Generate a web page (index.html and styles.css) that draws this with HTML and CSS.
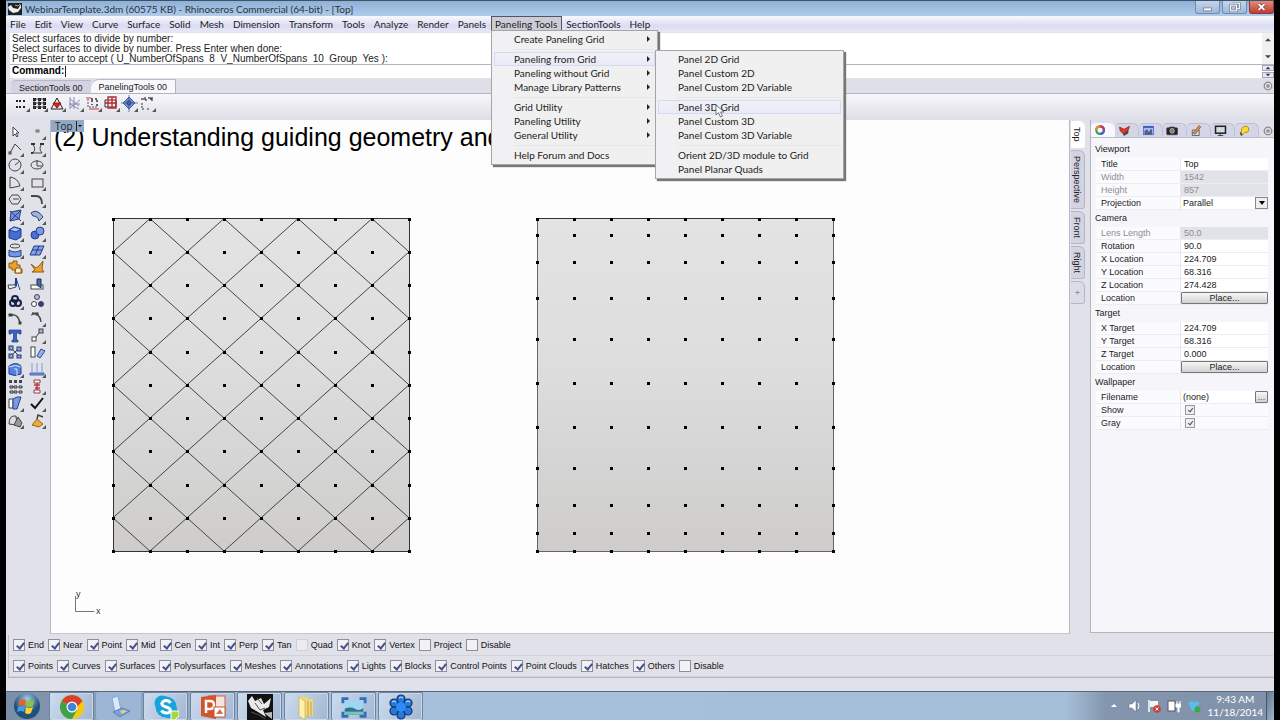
FILE: index.html
```html
<!DOCTYPE html>
<html lang="en">
<head>
<meta charset="utf-8">
<title>WebinarTemplate.3dm - Rhinoceros</title>
<link rel="stylesheet" href="styles.css">
</head>
<body>
<header class="titlebar">
  <svg class="app-icon" viewBox="0 0 14 12"><rect width="14" height="12" fill="#222"/><path d="M0 4l3-2 2 3 5 1 3-5v4l-3 4-5 1-4-3z" fill="#eee"/><path d="M7 2l3 1 2-2" stroke="#aaa" fill="none"/></svg>
  <h1 class="title">WebinarTemplate.3dm (60575 KB) - Rhinoceros Commercial (64-bit) - [Top]</h1>
  <div class="window-buttons">
    <button class="wbtn" aria-label="Minimize"><svg viewBox="0 0 24 12"><rect x="8" y="7" width="8" height="3" fill="#fff" stroke="#667" stroke-width=".7"/></svg></button>
    <button class="wbtn" aria-label="Restore"><svg viewBox="0 0 24 12"><path d="M11 2h6v6h-3M8 4h6v6H8z" fill="none" stroke="#56657d" stroke-width="2.4"/><path d="M11 2h6v6h-3M8 4h6v6H8z" fill="none" stroke="#fff" stroke-width="1.3"/></svg></button>
    <button class="wbtn close" aria-label="Close"><svg viewBox="0 0 24 12"><path d="M9 3l6 6M15 3l-6 6" stroke="#733" stroke-width="3.4"/><path d="M9 3l6 6M15 3l-6 6" stroke="#fff" stroke-width="2.2"/></svg></button>
  </div>
</header>

<nav class="menubar">
  <button>File</button><button>Edit</button><button>View</button><button>Curve</button><button>Surface</button><button>Solid</button><button>Mesh</button><button>Dimension</button><button>Transform</button><button>Tools</button><button>Analyze</button><button>Render</button><button>Panels</button>
  <div class="menu-anchor">
    <button class="open">Paneling Tools</button>
    <div class="menu main-menu">
      <button class="parent">Create Paneling Grid</button>
      <hr>
      <div class="menu-anchor">
        <button class="parent hot">Paneling from Grid</button>
        <div class="menu sub-menu">
          <button>Panel 2D Grid</button>
          <button>Panel Custom 2D</button>
          <button>Panel Custom 2D Variable</button>
          <hr>
          <button class="hot">Panel 3D Grid<svg class="cursor" viewBox="0 0 10 14"><path d="M1 1v10l2.500-2.500L5.500 13l2-1-2-4H9z" fill="#fff" stroke="#555" stroke-width=".8"/></svg></button>
          <button>Panel Custom 3D</button>
          <button>Panel Custom 3D Variable</button>
          <hr>
          <button>Orient 2D/3D module to Grid</button>
          <button>Panel Planar Quads</button>
        </div>
      </div>
      <button class="parent">Paneling without Grid</button>
      <button class="parent">Manage Library Patterns</button>
      <hr>
      <button class="parent">Grid Utility</button>
      <button class="parent">Paneling Utility</button>
      <button class="parent">General Utility</button>
      <hr>
      <button>Help Forum and Docs</button>
    </div>
  </div>
  <button>SectionTools</button><button>Help</button>
</nav>

<section class="command">
  <div class="history">
    <div class="lines">
      <p>Select surfaces to divide by number:</p>
      <p>Select surfaces to divide by number. Press Enter when done:</p>
      <p>Press Enter to accept ( U_NumberOfSpans&nbsp; 8&nbsp; V_NumberOfSpans&nbsp; 10&nbsp; Group&nbsp; Yes ):</p>
    </div>
    <div class="scroll"><svg viewBox="0 0 8 5"><path d="M4 0l4 4H0z"/></svg><svg viewBox="0 0 8 5"><path d="M0 0h8L4 4z"/></svg></div>
  </div>
  <div class="prompt">
    <label for="cmd">Command:</label><input id="cmd" type="text">
    <div class="spin"><button aria-label="Previous"><svg viewBox="0 0 8 5"><path d="M4 1l3 3H1z"/></svg></button><button aria-label="Next"><svg viewBox="0 0 8 5"><path d="M1 1h6L4 4z"/></svg></button></div>
  </div>
</section>

<div class="tabstrip">
  <button class="tab">SectionTools 00</button><button class="tab active">PanelingTools 00</button>
  <svg class="gear" viewBox="0 0 10 10"><circle cx="5" cy="5" r="3.800"/><circle cx="5" cy="5" r="1.200"/></svg>
</div>
<div class="toolbar" id="toolbar"></div>

<main class="workspace">
  <aside class="tools" id="tools"></aside>
  <section class="viewport">
    <svg class="scene" id="scene" aria-label="Paneling grids"></svg>
    <button class="view-label">Top<span class="caret"></span></button>
    <h2 class="scene-title">(2) Understanding guiding geometry and</h2>
  </section>
  <nav class="viewtabs">
    <button class="active">Top</button><button>Perspective</button><button>Front</button><button>Right</button><button class="plus">+</button>
  </nav>
  <aside class="panel">
    <div class="panel-tabs" id="panelTabs"></div>
    <form class="props">
      <h3>Viewport</h3>
      <div class="row"><label for="p1">Title</label><input id="p1" value="Top"></div>
      <div class="row off"><label for="p2">Width</label><input id="p2" value="1542" disabled></div>
      <div class="row off"><label for="p3">Height</label><input id="p3" value="857" disabled></div>
      <div class="row"><label for="p4">Projection</label><div class="pick"><select id="p4"><option>Parallel</option></select><span class="drop"></span></div></div>
      <h3>Camera</h3>
      <div class="row off"><label for="c1">Lens Length</label><input id="c1" value="50.0" disabled></div>
      <div class="row"><label for="c2">Rotation</label><input id="c2" value="90.0"></div>
      <div class="row"><label for="c3">X Location</label><input id="c3" value="224.709"></div>
      <div class="row"><label for="c4">Y Location</label><input id="c4" value="68.316"></div>
      <div class="row"><label for="c5">Z Location</label><input id="c5" value="274.428"></div>
      <div class="row"><label for="c6">Location</label><button type="button" id="c6" class="place">Place...</button></div>
      <h3>Target</h3>
      <div class="row"><label for="t1">X Target</label><input id="t1" value="224.709"></div>
      <div class="row"><label for="t2">Y Target</label><input id="t2" value="68.316"></div>
      <div class="row"><label for="t3">Z Target</label><input id="t3" value="0.000"></div>
      <div class="row"><label for="t4">Location</label><button type="button" id="t4" class="place">Place...</button></div>
      <h3>Wallpaper</h3>
      <div class="row"><label for="w1">Filename</label><div class="pick"><input id="w1" value="(none)"><button type="button" class="more">...</button></div></div>
      <div class="row"><label for="w2">Show</label><input id="w2" type="checkbox" class="mini" checked></div>
      <div class="row"><label for="w3">Gray</label><input id="w3" type="checkbox" class="mini" checked></div>
    </form>
  </aside>
</main>

<footer class="snaps">
  <div class="snap-row">
    <label><input type="checkbox" checked>End</label><label><input type="checkbox" checked>Near</label><label><input type="checkbox" checked>Point</label><label><input type="checkbox" checked>Mid</label><label><input type="checkbox" checked>Cen</label><label><input type="checkbox" checked>Int</label><label><input type="checkbox" checked>Perp</label><label><input type="checkbox" checked>Tan</label><label><input type="checkbox" class="faint">Quad</label><label><input type="checkbox" checked>Knot</label><label><input type="checkbox" checked>Vertex</label><label><input type="checkbox">Project</label><label><input type="checkbox">Disable</label>
  </div>
  <div class="snap-row">
    <label><input type="checkbox" checked>Points</label><label><input type="checkbox" checked>Curves</label><label><input type="checkbox" checked>Surfaces</label><label><input type="checkbox" checked>Polysurfaces</label><label><input type="checkbox" checked>Meshes</label><label><input type="checkbox" checked>Annotations</label><label><input type="checkbox" checked>Lights</label><label><input type="checkbox" checked>Blocks</label><label><input type="checkbox" checked>Control Points</label><label><input type="checkbox" checked>Point Clouds</label><label><input type="checkbox" checked>Hatches</label><label><input type="checkbox" checked>Others</label><label><input type="checkbox">Disable</label>
  </div>
  <div class="status"></div>
</footer>

<div class="taskbar">
  <button class="start" aria-label="Start"><svg viewBox="0 0 28 28"><defs><radialGradient id="orb" cy=".25"><stop offset="0" stop-color="#a8cfe6"/><stop offset="1" stop-color="#22507c"/></radialGradient></defs><circle cx="14" cy="14" r="13" fill="url(#orb)"/><path d="M6 9q4-3 7-1l-1 6q-3-2-7 0z" fill="#e8632b"/><path d="M14 8q3 2 7 0l-1 6q-4 2-7 0z" fill="#8cc63f"/><path d="M5 15q4-2 7 0l-1 5q-3-2-7 0z" fill="#3f9fe0"/><path d="M13 15q3 2 7 0l-2 6q-3 2-6 0z" fill="#fcd02f"/></svg></button>
  <button class="task" aria-label="Chrome"><svg viewBox="0 0 26 26"><circle cx="13" cy="13" r="12" fill="#f6c90e"/><path d="M13 13L2.600 7A12 12 0 0 1 23.400 7z" fill="#d8402f"/><path d="M13 13L2.600 7A12 12 0 0 0 13 25l5-9z" fill="#3da04a"/><path d="M13 7h10.400L18 13z" fill="#d8402f"/><circle cx="13" cy="13" r="5.500" fill="#fff"/><circle cx="13" cy="13" r="4.300" fill="#3f86d8"/></svg></button>
  <button class="task flat" aria-label="Scanner"><svg viewBox="0 0 26 26"><path d="M6 4l6-2 3 14-6 2z" fill="#dbe9fa" stroke="#8aa6d6"/><path d="M7 18l9-4 8 3-10 6z" fill="#7f9fd8" stroke="#5c7fc0"/><path d="M14 17l4-1 3 1-5 3z" fill="#d8dd6c"/></svg></button>
  <button class="task" aria-label="Skype"><svg viewBox="0 0 26 26"><circle cx="9" cy="9" r="7.500" fill="#17a4dc"/><circle cx="17" cy="17" r="7.500" fill="#17a4dc"/><circle cx="13" cy="13" r="10.500" fill="#17a4dc"/><path d="M17.500 9Q16 6.500 13 6.500T8.800 9.500Q9 12 13 13t4.500 3.500Q17 19 13.500 19T8.500 16.500" fill="none" stroke="#fff" stroke-width="3"/><path d="M18 17h8v5l-4 4h-4z" fill="#a6d83f" stroke="#fff"/></svg></button>
  <button class="task" aria-label="PowerPoint"><svg viewBox="0 0 26 26"><rect x="8" y="2" width="17" height="20" fill="#f7e4dc" stroke="#d0603a"/><path d="M1 3l15-2v24L1 22z" fill="#d3532a"/><path d="M6 19V7h4q4 0 4 4t-4 4H6" fill="none" stroke="#fff" stroke-width="2.500"/><rect x="14" y="13" width="11" height="10" fill="#fff" stroke="#c9572e"/><path d="M16 20l4-5 3 5z" fill="#d66d48"/></svg></button>
  <button class="task" aria-label="Rhinoceros"><svg viewBox="0 0 26 26"><rect width="26" height="26" fill="#111"/><path d="M1 7l4-5 3 5 6-3 3 6 7-6-2 9-6 3 3 7-8-5-7-4z" fill="#e8e8e8"/><path d="M8 9l5 7 5-2M4 18l8 3 6 4M10 4l5 6" stroke="#555" fill="none"/><path d="M17 19l8-1v7z" fill="#bbb"/></svg></button>
  <button class="task" aria-label="Explorer"><svg viewBox="0 0 26 26"><path d="M5 3h8l2 2h4v17H8l-3-2z" fill="#f0d779"/><path d="M5 3l6 4v19l-6-4z" fill="#fff0ae" stroke="#cfae4a" stroke-width=".7"/><path d="M14 7v16M17 8v14" stroke="#c5a548"/></svg></button>
  <button class="task" aria-label="Capture"><svg viewBox="0 0 28 26"><rect x="4" y="6" width="20" height="15" fill="#9fd7f3"/><path d="M4 15q6-3 11 0t9-1v7H4z" fill="#31748d"/><path d="M4 18h20v3H4z" fill="#7ac2ba"/><path d="M2 9V4h6M20 4h6v5M26 18v5h-6M8 23H2v-5" stroke="#2f70b8" stroke-width="3" fill="none"/></svg></button>
  <button class="task" aria-label="GoToWebinar"><svg viewBox="0 0 26 26"><g fill="#2779df" stroke="#103269" stroke-width="1.200"><circle cx="13" cy="5" r="4"/><circle cx="20" cy="9" r="4"/><circle cx="20" cy="17" r="4"/><circle cx="13" cy="21" r="4"/><circle cx="6" cy="17" r="4"/><circle cx="6" cy="9" r="4"/></g><circle cx="13" cy="13" r="5" fill="#2e8cf5"/><path d="M11 4q2-2 4 0M4 8q2-2 4 0M18 8q2-2 4 0" stroke="#c8e8ff" fill="none"/></svg></button>
  <div class="tray">
    <svg viewBox="0 0 14 14"><path d="M4 8l3-3 3 3z" fill="#fff"/></svg>
    <svg viewBox="0 0 14 14"><path d="M2 5h3l4-4v12L5 9H2z" fill="#fff" stroke="#567" stroke-width=".5"/><path d="M11 4q2 3 0 6" stroke="#fff" fill="none"/></svg>
    <svg viewBox="0 0 14 14"><path d="M2 1v12" stroke="#fff" stroke-width="1.500"/><path d="M3 2h8v6H3z" fill="#f3f3f3"/><circle cx="10" cy="10" r="3.800" fill="#d43b35"/><path d="M8.500 8.500l3 3M11.500 8.500l-3 3" stroke="#fff"/></svg>
    <svg viewBox="0 0 14 14"><rect x="1" y="2" width="7" height="10" fill="#fff" stroke="#556"/><path d="M10 2v3M13 2v3M9 5h5v3h-2v5h-1V8H9z" stroke="#fff" fill="#fff"/></svg>
    <svg viewBox="0 0 14 14"><path d="M1 4l4-2 2 2 3-2 3 3-4 2 1 4-5 1-2-5z" fill="#55c0ee"/><circle cx="10.500" cy="10.500" r="3" fill="#3aaa46"/></svg>
    <div class="clock"><span>9:43 AM</span><span>11/18/2014</span></div>
    <button class="show-desktop" aria-label="Show desktop"></button>
  </div>
</div>
<script src="script.js"></script>
</body>
</html>
```
FILE: styles.css
```css
* { box-sizing: border-box; }
body {
  margin: 0; padding: 0 6px; height: 100vh; min-height: 600px;
  display: flex; flex-direction: column; overflow: hidden;
  background: #000; color: #222;
  font: 9px/12px "Liberation Sans", Arial, sans-serif;
}
button, input, select { font: inherit; color: inherit; border: 0; margin: 0; padding: 0; background: none; }
h1, h2, h3, p { margin: 0; font-weight: normal; }
svg { display: block; }

.titlebar {
  display: flex; align-items: center; gap: 3px; height: 16px; flex: none; padding-left: 2px;
  background: linear-gradient(#8fb0d6, #b0cbe8); border-top: 1px solid #3d5361;
}
.app-icon { width: 14px; height: 12px; }
.title { font: 10px/14px Lato, "Open Sans", sans-serif; color: #28323f; flex: 1; }
.window-buttons { display: flex; gap: 2px; align-self: stretch; }
.wbtn { width: 25px; height: 13px; border: 1px solid #6f8cb0; border-top: 0; border-radius: 0 0 3px 3px; background: linear-gradient(#c3d5ea, #9db9da); }
.wbtn svg { width: 100%; height: 12px; }
.wbtn.close { background: linear-gradient(#e08c80, #c33c2b); border-color: #8c3a38; }

.menubar {
  position: relative; z-index: 5; display: flex; height: 16px; flex: none;
  font: 10px/14px Lato, "Open Sans", sans-serif; color: #222;
  background: linear-gradient(#f8f9fe, #dadcf4 60%, #e6e7f4);
}
.menubar > button, .menu-anchor > .open { padding: 0 5px 0 4px; height: 15px; white-space: nowrap; }
.menu-anchor { position: relative; }
.menu-anchor > .open { background: #ccccd8; border: 1px solid #55555f; padding: 0 4px 0 3px; }
.menu {
  position: absolute; display: flex; flex-direction: column; padding: 1px 2px 2px;
  background: linear-gradient(90deg, #f1f1f3 20px, #f0f0f0 22px);
  border: 1px solid #a5a5a8; box-shadow: 2px 2px 1px #777;
}
.main-menu { left: 0; top: 14px; width: 167px; }
.sub-menu { left: 161px; top: -2px; width: 189px; z-index: 2; }
.menu button { display: block; width: 100%; height: 14px; padding-left: 20px; text-align: left; white-space: nowrap; position: relative; }
.menu button.hot { background: linear-gradient(#f0f0f8, #e8eaf6); box-shadow: inset 0 0 0 1px #d3dcef; }
.menu hr { width: auto; height: 1px; margin: 3px 0 2px 20px; border: 0; background: #e6e6e8; }
.parent::after { content: ""; position: absolute; right: 5px; top: 4px; border: 3px solid transparent; border-left-color: #222; border-right: 0; }
.menu .cursor { position: absolute; left: 57px; top: 4px; width: 10px; height: 14px; z-index: 3; }

.command { flex: none; background: #e3e3ec; padding: 1px 0 1px 4px; font-size: 10px; }
.history { display: flex; height: 32px; background: #fff; border-bottom: 1px solid #b5b5bb; }
.lines { flex: 1; line-height: 10px; padding: 1px 0 0 2px; }
.scroll { width: 12px; background: #f1f1f3; display: flex; flex-direction: column; justify-content: space-between; align-items: center; padding: 5px 0; }
.scroll svg { width: 6px; height: 4px; fill: #444; }
.prompt { display: flex; height: 13px; background: #fff; padding-left: 2px; }
.prompt label { font-weight: bold; color: #000; }
.prompt input { flex: 1; margin: 1px 0 1px 1px; border-left: 1px solid #222; outline: 0; }
.spin { display: flex; flex-direction: column; width: 12px; gap: 1px; }
.spin button { height: 6px; background: #e8e8f2; border: 1px solid #a8a8bb; }
.spin svg { width: 8px; height: 4px; margin: auto; fill: #336; }

.tabstrip { display: flex; flex: none; align-items: flex-end; height: 15px; padding-left: 5px; background: #dfdfe8; border-bottom: 1px solid #b3b3c0; }
.tab { height: 13px; padding: 1px 8px 0; background: #d3d3e2; border-top: 1px solid #b8b8c6; border-radius: 5px 0 0 0; }
.tab.active { height: 14px; background: #f8f8fc; border-right: 1px solid #b3b3c0; border-radius: 8px 0 0 0; }
.gear { width: 10px; height: 10px; margin: 0 1px 2px auto; fill: none; stroke: #888; stroke-width: 1.200; }
.toolbar { display: flex; flex: none; gap: 1px; height: 26px; padding: 1px 7px; background: linear-gradient(#f7f7fa, #dedee8); }
.toolbar button { width: 17px; height: 17px; }
.toolbar svg, .tools svg { width: 17px; height: 17px; }

.workspace { flex: 1; min-height: 0; display: flex; background: #e1e1ea; }
.tools { width: 45px; flex: none; display: grid; grid-template-columns: 17px 17px; grid-auto-rows: 17px; column-gap: 5px; align-content: start; padding: 3px 0 0 1px; border-right: 1px solid #b9b9c4; }
.tools button { width: 17px; height: 17px; }
.viewport { flex: 1; min-width: 0; position: relative; background: #fdfdfd; border-bottom: 1px solid #c6c6ce; overflow: hidden; }
.scene { position: absolute; left: 0; top: 0; width: 100%; height: 100%; }
.view-label { position: absolute; left: 0; top: 0; display: flex; align-items: center; width: 33px; height: 12px; padding-left: 4px; z-index: 1; background: #91a9c4; font: 10px/12px "Open Sans", sans-serif; }
.caret { margin-left: 3px; padding-left: 1px; border-left: 1px solid #222; height: 10px; display: flex; align-items: center; }
.caret::after { content: ""; border: 2px solid transparent; border-top-color: #111; border-bottom: 0; }
.scene-title { position: relative; padding: 3px 0 0 3px; font-size: 25px; line-height: 29px; color: #000; white-space: nowrap; }

.viewtabs { width: 21px; flex: none; display: flex; flex-direction: column; gap: 2px; padding: 1px 5px 0 1px; border-left: 1px solid #b9b9c4; }
.viewtabs button { writing-mode: vertical-rl; width: 14px; padding: 5px 0; font-size: 9px; line-height: 14px; background: #d3d3e3; border: 1px solid #b5b5c6; border-left: 0; border-radius: 0 6px 3px 0; text-align: left; }
.viewtabs .active { background: #fff; border-color: #fff; }
.viewtabs .plus { color: #888; padding: 8px 0; background: #dcdce8; }

.panel { width: 184px; flex: none; display: flex; flex-direction: column; margin-bottom: 1px; border-left: 1px solid #b5b5c2; border-bottom: 1px solid #b5b5c2; background: #f6f6fa; }
.panel-tabs { display: flex; height: 18px; padding-top: 3px; background: #dfdfe9; border-bottom: 1px solid #bcbccb; }
.panel-tabs button { width: 24px; height: 14px; padding-left: 3px; background: #d4d5e6; border-top: 1px solid #c0c0d0; border-right: 1px solid #c0c0d0; border-radius: 4px 6px 0 0; }
.panel-tabs button:first-child { background: #f8f8fc; border-color: #f8f8fc; }
.panel-tabs svg { width: 13px; height: 13px; }
.panel-tabs .gear { width: 10px; height: 10px; margin-top: 3px; }
.props { padding: 3px 6px 0 4px; }
.props h3 { height: 17px; padding-top: 2px; font-size: 9px; line-height: 12px; }
.row { display: grid; grid-template-columns: 85px 1fr; height: 13px; margin-left: 1px; border-bottom: 1px solid #ececf1; background: #fbfbfd; }
.row label { padding-left: 5px; border-right: 1px solid #e6e6ec; }
.row input, .row select { width: 100%; min-width: 0; height: 12px; padding: 0 3px; appearance: none; background: #fff; }
.row.off { color: #8d8d95; }
.row.off input { background: #e2e2e9; color: #8d8d95; }
.pick { display: flex; min-width: 0; }
.pick select, .pick input { flex: 1; padding-left: 2px; }
.drop { width: 13px; height: 12px; border: 1px solid #888; background: #eee; display: flex; align-items: center; justify-content: center; }
.drop::after { content: ""; border: 3px solid transparent; border-top: 4px solid #000; border-bottom: 0; }
.place, .more { height: 12px; line-height: 9px; border: 1px solid #777; border-radius: 1px; background: linear-gradient(#f6f6f6, #d2d2d2); }
.more { width: 13px; color: #555; }
.row .mini { width: 10px; height: 10px; margin: 1px 0 0 4px; padding: 0; border: 1px solid #999; background: #efeff2; }

.snaps { flex: none; background: #e1e1ea; padding-top: 1px; }
.snap-row { display: flex; gap: 4px; height: 21px; align-items: center; padding-left: 4px; margin-left: 2px; border-left: 1px solid #c0c0cb; border-bottom: 1px solid #d2d2dc; color: #111; white-space: nowrap; }
.snap-row label { display: flex; align-items: center; gap: 3px; }
.snap-row input { appearance: none; width: 12px; height: 12px; border: 1px solid #8f8f9a; background: #f1f1f6; }
.snap-row .faint { border-color: #d0d0d8; background: #ececf0; }
input:checked::after { content: ""; display: block; width: 3px; height: 6px; margin: 1px 0 0 4px; border: solid #43528f; border-width: 0 2px 2px 0; transform: rotate(38deg); }
.row .mini:checked::after { width: 2px; height: 4px; margin-left: 3px; border-color: #555; border-width: 0 1px 1px 0; }
.status { height: 14px; border-top: 1px solid #b5b5c0; margin-left: 2px; }

.taskbar { flex: none; display: flex; gap: 2px; height: 29px; padding-left: 1px; border-top: 1px solid #57687c; background: linear-gradient(90deg, #7b8ea8, #8da3be 140px, #a6c0dd 300px, #a5bfd9 1060px, #8496ae 1100px, #8092aa); }
.start { width: 40px; height: 28px; }
.start svg { width: 28px; height: 28px; margin: auto; }
.task { width: 45px; height: 28px; border: 1px solid #6d83a0; border-bottom: 0; border-radius: 2px; background: linear-gradient(120deg, #cddbed, #a3b7d2); box-shadow: inset 0 0 0 1px #c9d8ea; }
.task svg { width: 26px; height: 26px; margin: auto; }
.task.flat { border-color: #9cb5d4; background: #9db6d5; box-shadow: none; }
.tray { display: flex; align-items: center; gap: 6px; margin-left: auto; color: #fff; }
.tray svg { width: 14px; height: 14px; }
.clock { display: flex; flex-direction: column; align-items: center; margin-left: 1px; font: 10px/13px Lato, "Open Sans", sans-serif; }
.show-desktop { width: 8px; height: 28px; margin-left: -3px; border-left: 1px solid #44566e; background: linear-gradient(110deg, #66798f, #a3b4c8); }
```
FILE: script.js
```js
const svg = (inner) => `<svg viewBox="0 0 17 17" fill="none" stroke="#444">${inner}</svg>`;
const corner = '<path d="M17 13v4h-4z" fill="#555" stroke="none"/>';
const fill = (id, items) => {
  document.getElementById(id).innerHTML = items
    .map(([name, inner]) => `<button aria-label="${name}">${svg(inner)}</button>`).join("");
};
const grid = (xs, ys, s, colour) => xs.map((x) => ys.map((y) =>
  `<rect x="${x}" y="${y}" width="${s}" height="${s}" fill="${colour}" stroke="none"/>`).join("")).join("");

fill("toolbar", [
  ["Grid points", grid([3, 6, 10], [5, 11], 2, "#222") + corner],
  ["Array grid", grid([2, 7, 12], [3, 7, 11], 3, "#111") + '<path d="M3 4h11M3 8h11M3 12h11M3 4v10M8 4v10M13 4v10"/>' + corner],
  ["Triangle", '<path d="M8 3L2 14h12z" stroke="#222"/><path d="M4 8h8l-4 5z" fill="#d32020" stroke="#a11"/>' + corner],
  ["Lattice", '<path d="M3 2v12M7 2v12M3 4l9 7M3 9l9 5M3 13l10-8M2 9h11" stroke="#8a8fb5"/>' + corner],
  ["Offset points", '<path d="M3 4v8h9" stroke="#557" stroke-dasharray="2 1"/><path d="M6 4h8M12 5v8M7 5v5" stroke="#333" stroke-width="1.500" stroke-dasharray="2 2"/><path d="M4 14h10M1 3h5" stroke="#d33"/>' + corner],
  ["Red panels", '<path d="M2 5h11v7H2z" stroke="#333"/><path d="M5 2h8v11H5zM9 2v11M2 8h12" stroke="#b8262a" stroke-width="1.300"/>' + corner],
  ["Blue diamond", '<path d="M8 2l6 6-6 6-6-6z" fill="#688ee6" stroke="#335fc2"/><path d="M8 0v17M0 8h17" stroke="#456" stroke-width=".7"/><circle cx="8" cy="8" r="2" fill="#4060c0"/>' + corner],
  ["About", '<path d="M2 4h3M6 2v3h2M9 3h3v2M13 2v4" stroke="#111"/><path d="M3 8v6h3M8 14h2" stroke="#333" stroke-dasharray="2 1"/>' + corner]
]);

fill("tools", [
  ["Select", '<path d="M6 4v9l2-2 2 3 1-1-2-3h3z" fill="#fff"/>'],
  ["Point", '<rect x="7" y="7" width="3" height="2" fill="#999" stroke="#777"/>' + corner],
  ["Polyline", '<path d="M3 13L8 4l6 6"/><rect x="2" y="12" width="2" height="2"/>' + corner],
  ["Curve", '<path d="M3 4q5 4 1 9h9q-4-5 0-9"/><path d="M2 3h4v2H2zM11 3h4v2h-4zM2 12h2v2H2z" fill="#333" stroke="none"/>' + corner],
  ["Circle", '<circle cx="8" cy="8" r="6"/><path d="M8 8l5-4"/>' + corner],
  ["Ellipse", '<ellipse cx="8" cy="8" rx="6" ry="4"/><path d="M8 3v6h5"/>' + corner],
  ["Arc", '<path d="M3 14V3q8 1 10 9L3 14"/>' + corner],
  ["Rectangle", '<rect x="3" y="5" width="11" height="8"/>' + corner],
  ["Polygon", '<path d="M5 4h6l3 4-3 5H5L2 8z"/><path d="M6 8h6"/>' + corner],
  ["Fillet", '<path d="M2 5h5q6 0 6 8" stroke-width="1.800"/>' + corner],
  ["Surface", '<path d="M4 4l10-2-2 9-9 2z" fill="#7695df" stroke="#253e7c"/><path d="M3 3l11 10M13 3L3 13" stroke="#253e7c"/>' + corner],
  ["Sweep", '<path d="M2 5q6-5 12 4l-4 4Q9 8 4 8z" fill="#9db3e8" stroke="#345"/>' + corner],
  ["Box", '<path d="M2 5l5-3 7 2v8l-5 3-7-2z" fill="#456bd5" stroke="#223c87"/><path d="M2 5l5-3 7 2-5 3z" fill="#a7c0ff" stroke="#223c87"/>' + corner],
  ["Boolean", '<circle cx="6" cy="10" r="4" fill="#4a70d4" stroke="#263f86"/><circle cx="11" cy="6" r="4" fill="#7b99ea" stroke="#263f86"/>' + corner],
  ["Project", '<ellipse cx="8" cy="4" rx="5" ry="2"/><path d="M2 8q6 4 12 0v6q-6 2-12 0z" fill="#7595e5" stroke="#254386"/>' + corner],
  ["Mesh", '<path d="M5 4h10l-4 9H1z" fill="#82a0e6" stroke="#263f86"/><path d="M3 8h10M10 4l-4 9" stroke="#263f86"/>' + corner],
  ["Join", '<path d="M2 4h4V2h4v4h3v4h2v4H8v-3H5V9H2z" fill="#e9a12b" stroke="#8f5b10"/><path d="M9 9h5v5H8z" fill="#fff1cf" stroke="#8f5b10"/>'],
  ["Explode", '<path d="M2 5l5 4 3-2 4-5-1 8 2 3H3l3-2z" fill="#f0a32a" stroke="#8f5b10"/>'],
  ["Trim", '<path d="M9 2l4 12" stroke="#2d53b5"/><path d="M1 9h7l1-7v9l-7 2z" fill="#edf1fa"/><path d="M9 2v8" stroke="#223f92" stroke-width="2"/>'],
  ["Split", '<rect x="2" y="9" width="12" height="4" fill="#fff"/><path d="M8 3h4v9L8 9z" fill="#4367be" stroke="#234"/>'],
  ["Group", '<circle cx="8" cy="6" r="3" stroke="#182348" stroke-width="2"/><circle cx="6" cy="10" r="3" stroke="#182348" stroke-width="2"/><circle cx="11" cy="10" r="3" stroke="#182348" stroke-width="2"/>' + corner],
  ["Ungroup", '<circle cx="8" cy="4" r="2.500" fill="#b4b7e8"/><circle cx="5" cy="11" r="2.500" fill="#fff"/><circle cx="12" cy="11" r="2.500" fill="#283e92"/>'],
  ["Edit points", '<path d="M3 5q8-2 10 8" stroke-width="1.500"/><rect x="2" y="4" width="3" height="2" fill="#333"/><rect x="12" y="12" width="2" height="2" fill="#333"/>'],
  ["Control points", '<path d="M3 3q8 0 9 9M2 5l7-2" stroke-width="1.300"/><rect x="7" y="3" width="2" height="2"/>' + corner],
  ["Text", '<path d="M2 3h12v4h-2V6H9.500v7H11v2H5v-2h1.500V6H4v1H2z" fill="#3c62c4" stroke="#223f86" stroke-width=".7"/>'],
  ["Move", '<rect x="10" y="2" width="4" height="4" fill="#9cace0"/><rect x="3" y="10" width="4" height="4" fill="#fff"/><path d="M7 10l3-4"/>' + corner],
  ["Copy", '<path d="M4 4l8 8M12 4l-8 8"/><g fill="#8da2dc" stroke="#263a75"><rect x="2" y="2" width="4" height="4"/><rect x="10" y="3" width="4" height="4"/><rect x="2" y="10" width="4" height="4"/><rect x="10" y="11" width="4" height="3"/></g>'],
  ["Rotate", '<rect x="2" y="3" width="4" height="10" fill="#fff"/><path d="M8 12l4-7 4 2-5 7z" fill="#97b0ea" stroke="#2c4a98"/>'],
  ["Cage", '<path d="M2 5q7-5 12 0v8q-6 3-12 0z" fill="#5480de" stroke="#223f86"/><path d="M2 6q7-3 12 0M7 8h3v7" stroke="#d8e4ff"/>' + corner],
  ["Project to plane", '<path d="M3 2v9M8 2v9M13 2v9" stroke="#849bd6"/><path d="M1 12h14v2H1z" fill="#7c99e4" stroke="#4864b7"/>' + corner],
  ["Array", grid([2, 7, 12], [2], 3, "#445") + '<path d="M3 8h3v2H3zM7 8h3v2H7zM12 8h3v2h-3zM3 13h3v2H3zM7 13h3v2H7zM12 13h3v2h-3z" stroke="#333"/>'],
  ["Flow", '<path d="M5 2h6v3H5zM5 12h6v3H5z" fill="#fff" stroke="#9c3641"/><path d="M8 5v7M5 7h6M6 10h5" stroke="#b53b45" stroke-width="1.500"/>' + corner],
  ["Panels", '<path d="M2 4h4v9H2z" fill="#fff"/><path d="M6 4l4-2h4l-4 12H6z" fill="#789be5" stroke="#264486"/>' + corner],
  ["Check", '<path d="M2 9l4 4 8-10" stroke="#111" stroke-width="2"/>' + corner],
  ["Solids", '<path d="M2 12q0-9 7-8l1 9z" fill="#ddd"/><path d="M7 13l4-8 4 6-2 4z" fill="#999"/>' + corner],
  ["Render", '<path d="M3 13l5-6 6 5-4 3z" fill="#e9ae32" stroke="#976414"/><path d="M8 7l1-4 5 2" stroke-width="1.500"/>' + corner]
]);

const tabIcons = [
  '<circle cx="8" cy="8" r="5" stroke="#3aa354" stroke-width="3"/><path d="M3 8a5 5 0 0 1 5-5" stroke="#e88a25" stroke-width="3"/><path d="M8 3a5 5 0 0 1 5 5" stroke="#d32c5e" stroke-width="3"/><path d="M13 8a5 5 0 0 1-5 5" stroke="#4c60d0" stroke-width="3"/>',
  '<path d="M2 4l6 3 7-4-2 6-6 4-4-4z" fill="#e03a27" stroke="#902015"/><path d="M7 13l6-4v3l-5 3z" fill="#446"/>',
  '<rect x="2" y="3" width="13" height="11" fill="#a5bcf3" stroke="#4863bd"/><path d="M2 4h13" stroke="#3154b5" stroke-width="2"/><path d="M4 13V9l3-1 2 4 3-5 1 6z" fill="#476cc9"/>',
  '<rect x="1" y="5" width="14" height="9" rx="1" fill="#222"/><path d="M5 4h6v2H5z" fill="#222"/><circle cx="8" cy="9" r="3" fill="#777" stroke="#ccc"/>',
  '<path d="M3 8h9v7H3z" fill="#ddd"/><path d="M4 12l8-10 2 2-7 9z" fill="#d8914e" stroke="#815129"/>',
  '<rect x="2" y="3" width="13" height="9" fill="#d5dce0" stroke="#222" stroke-width="2"/><path d="M8 12v3M5 15h7" stroke="#222"/>',
  '<path d="M4 12l1-6q2-4 6-3t3 5-5 3l-3 3z" fill="#ffdb30" stroke="#9b7213"/><path d="M3 11l3 3-2 1z" fill="#555"/>'
];
document.getElementById("panelTabs").innerHTML = tabIcons
  .map((icon, i) => `<button aria-label="Panel ${i + 1}">${svg(icon)}</button>`).join("") +
  '<svg class="gear" viewBox="0 0 10 10"><circle cx="5" cy="5" r="3.8"/><circle cx="5" cy="5" r="1.2"/></svg>';

const stepX = 37;
const stepY = 33.25;
const dot = (x, y) => `<rect x="${Math.round(x) - 1}" y="${Math.round(y) - 1}" width="3" height="3"/>`;
let dots = "";
let diamonds = "";
for (let c = 0; c <= 8; c++) {
  for (let r = 0; r <= 10; r++) {
    const x = 62 + c * stepX;
    const y = 98.6 + r * stepY;
    dots += dot(x, y);
    if (c < 8 && r < 10) {
      diamonds += (c + r) % 2
        ? `M${x} ${y}l${stepX} ${stepY}`
        : `M${x} ${y + stepY}l${stepX} ${-stepY}`;
    }
  }
}
const rows = [99, 115, 142, 178, 219, 263, 307, 348, 385, 413, 431];
for (let c = 0; c <= 8; c++) rows.forEach((y) => { dots += dot(486 + c * stepX, y); });
document.getElementById("scene").innerHTML = `
  <defs><linearGradient id="shade" x2="0" y2="1"><stop offset="0" stop-color="#e3e3e3"/><stop offset=".4" stop-color="#dedede"/><stop offset="1" stop-color="#cecdcc"/></linearGradient></defs>
  <g fill="url(#shade)" stroke="#333"><rect x="62.5" y="98.5" width="296" height="333"/><rect x="486.500" y="98.500" width="296" height="333" stroke="#6d6262"/></g>
  <path d="M486 98.500h297" stroke="#333"/>
  <path d="${diamonds}" fill="none" stroke="#444"/>
  <g fill="#000">${dots}</g>
  <path d="M24.500 476v15.500h19" fill="none" stroke="#777"/>
  <path d="M793.500 9v17" stroke="#000" stroke-width="2"/>
  <text x="25" y="477" font-size="9" fill="#333">y</text><text x="45" y="494" font-size="9" fill="#333">x</text>`;
```
